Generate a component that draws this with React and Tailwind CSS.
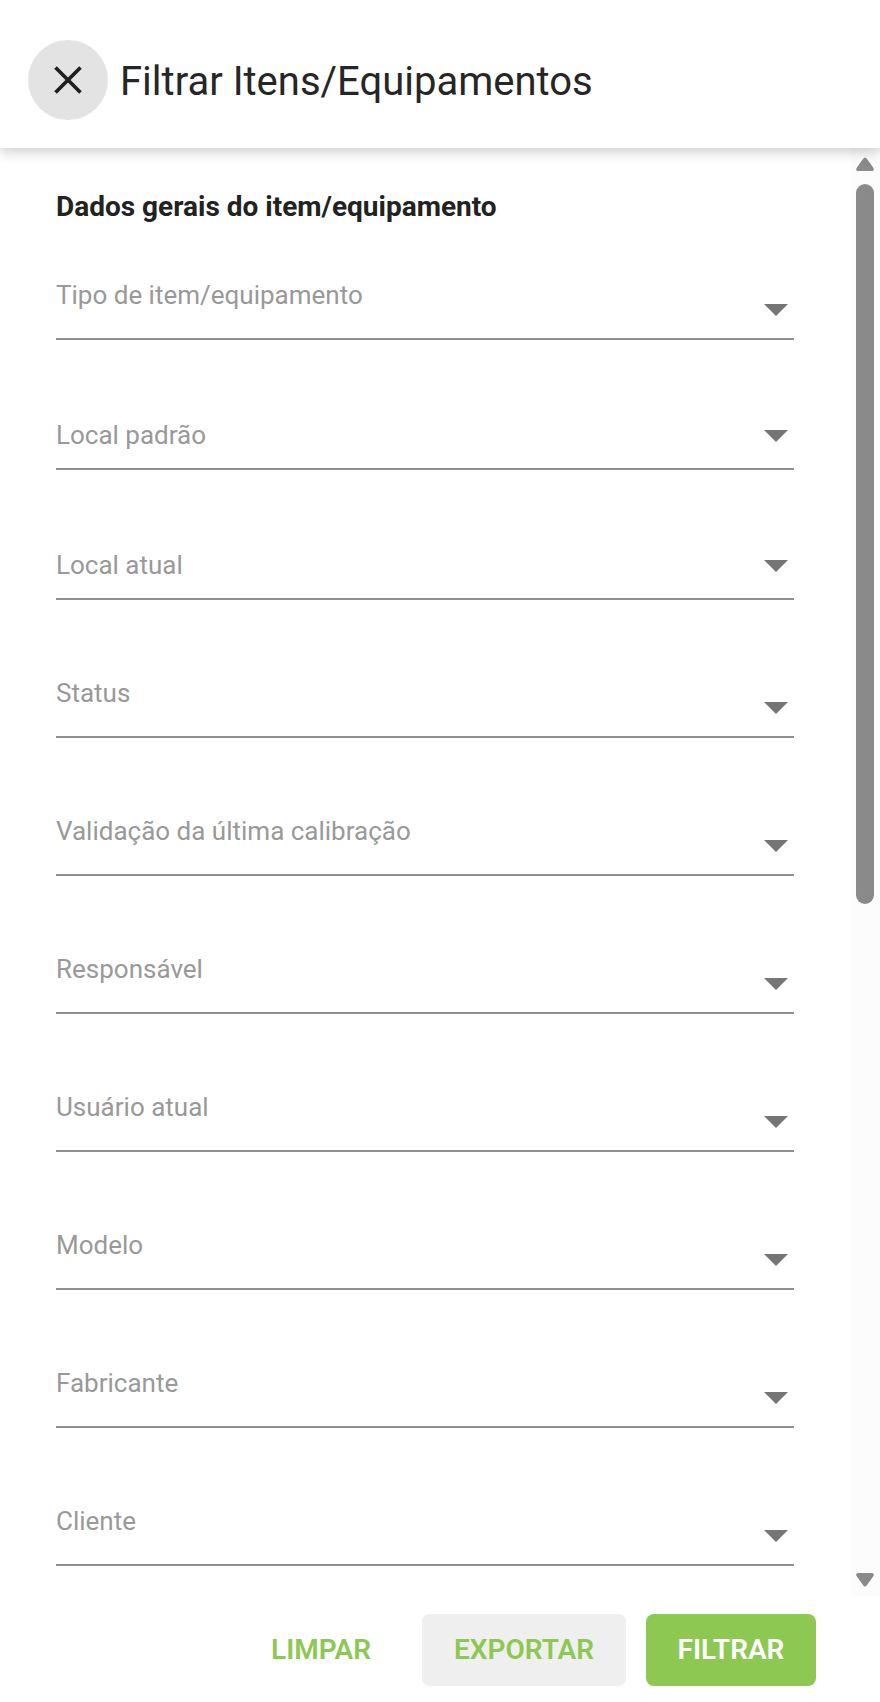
const rows = [
  { label: "Tipo de item/equipamento", h: "h-[117px]", lab: "pb-[28px]", car: "pb-[22px]" },
  { label: "Local padrão", h: "h-[130px]", lab: "pb-[18px]", car: "pb-[26px]" },
  { label: "Local atual", h: "h-[130px]", lab: "pb-[18px]", car: "pb-[26px]" },
  { label: "Status", h: "h-[138px]", lab: "pb-[28px]", car: "pb-[22px]" },
  { label: "Validação da última calibração", h: "h-[138px]", lab: "pb-[28px]", car: "pb-[22px]" },
  { label: "Responsável", h: "h-[138px]", lab: "pb-[28px]", car: "pb-[22px]" },
  { label: "Usuário atual", h: "h-[138px]", lab: "pb-[28px]", car: "pb-[22px]" },
  { label: "Modelo", h: "h-[138px]", lab: "pb-[28px]", car: "pb-[22px]" },
  { label: "Fabricante", h: "h-[138px]", lab: "pb-[28px]", car: "pb-[22px]" },
  { label: "Cliente", h: "h-[138px]", lab: "pb-[28px]", car: "pb-[22px]" },
];

function Caret() {
  return (
    <svg width="24" height="12" viewBox="0 0 24 12" className="block">
      <path d="M0 0h24L12 12z" fill="#757575" />
    </svg>
  );
}

function Row({ label, h, lab, car }) {
  return (
    <div className={`flex items-end justify-between w-[738px] border-b-2 border-[#8f8f8f] pr-[6px] ${h}`}>
      <div className={`text-[26px] leading-[30px] text-[#999999] ${lab}`}>{label}</div>
      <div className={car}>
        <Caret />
      </div>
    </div>
  );
}

export default function App() {
  return (
    <div className="w-[880px] h-[1702px] bg-white flex flex-col overflow-hidden font-['Roboto',sans-serif]">
      <header className="relative z-10 h-[148px] shrink-0 bg-white flex items-center pl-[28px] pt-[12px] shadow-[0_4px_12px_rgba(0,0,0,0.2)]">
        <div className="w-[80px] h-[80px] rounded-full bg-[#e3e3e3] flex items-center justify-center">
          <svg width="28" height="28" viewBox="0 0 28 28">
            <path d="M1.5 1.5L26.5 26.5M26.5 1.5L1.5 26.5" stroke="#1f1f1f" strokeWidth="3.7" fill="none" />
          </svg>
        </div>
        <h1 className="ml-[12px] text-[40px] leading-[48px] font-normal text-[#262626] mt-[4px]">Filtrar Itens/Equipamentos</h1>
      </header>
      <div className="h-[1448px] flex shrink-0">
        <div className="w-[850px] pl-[56px] pt-[43px] overflow-hidden">
          <h2 className="text-[28px] leading-[32px] font-bold text-[#222222]">Dados gerais do item/equipamento</h2>
          <div>
            {rows.map((r) => (
              <Row key={r.label} {...r} />
            ))}
          </div>
        </div>
        <div className="w-[30px] bg-[#fcfcfc] flex flex-col items-center">
          <svg width="18" height="14" viewBox="0 0 18 14" className="mt-[9px] block">
            <path d="M9 0.5Q10 0.5 11 2L17.5 11Q18.5 14 16 14H2Q-0.5 14 0.5 11L7 2Q8 0.5 9 0.5z" fill="#8a8a8a" />
          </svg>
          <div className="mt-[13px] w-[18px] h-[720px] rounded-full bg-[#8a8a8a]" />
          <svg width="18" height="14" viewBox="0 0 18 14" className="mt-[669px] block">
            <path d="M9 13.5Q8 13.5 7 12L0.5 3Q-0.5 0 2 0H16Q18.5 0 17.5 3L11 12Q10 13.5 9 13.5z" fill="#8a8a8a" />
          </svg>
        </div>
      </div>
      <footer className="flex-1 flex items-start justify-end pt-[18px] pr-[64px]">
        <button className="h-[72px] px-[32px] rounded-[8px] text-[28px] font-semibold text-[#8dc853]">LIMPAR</button>
        <button className="ml-[19px] h-[72px] w-[204px] rounded-[8px] bg-[#efefef] text-[28px] font-semibold text-[#8dc853]">EXPORTAR</button>
        <button className="ml-[20px] h-[72px] w-[170px] rounded-[8px] bg-[#8dc853] text-[28px] font-semibold text-white">FILTRAR</button>
      </footer>
    </div>
  );
}
